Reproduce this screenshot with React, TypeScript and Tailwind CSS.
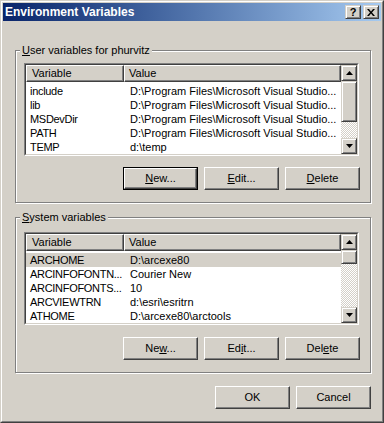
import type { ReactNode } from 'react';

type Row = { name: string; value: string; selected?: boolean };

const userVars: Row[] = [
  { name: 'include', value: 'D:\\Program Files\\Microsoft Visual Studio...' },
  { name: 'lib', value: 'D:\\Program Files\\Microsoft Visual Studio...' },
  { name: 'MSDevDir', value: 'D:\\Program Files\\Microsoft Visual Studio...' },
  { name: 'PATH', value: 'D:\\Program Files\\Microsoft Visual Studio...' },
  { name: 'TEMP', value: 'd:\\temp' },
];

const systemVars: Row[] = [
  { name: 'ARCHOME', value: 'D:\\arcexe80', selected: true },
  { name: 'ARCINFOFONTN...', value: 'Courier New' },
  { name: 'ARCINFOFONTS...', value: '10' },
  { name: 'ARCVIEWTRN', value: 'd:\\esri\\esritrn' },
  { name: 'ATHOME', value: 'D:\\arcexe80\\arctools' },
];

function Arrow({ up }: { up?: boolean }) {
  return (
    <svg width="7" height="4" viewBox="0 0 7 4">
      {up ? <path d="M3.5 0 L7 4 L0 4 Z" fill="#000" /> : <path d="M0 0 L7 0 L3.5 4 Z" fill="#000" />}
    </svg>
  );
}

// raised 3d box used by scroll buttons and thumb
const raised =
  'border-t border-l border-t-[#d4d0c8] border-l-[#d4d0c8] border-r border-b border-r-[#404040] border-b-[#404040] shadow-[inset_1px_1px_0_#fff,inset_-1px_-1px_0_#808080] bg-[#d4d0c8]';

function ScrollBar({ thumb }: { thumb: number }) {
  return (
    <div className="w-[16px] flex flex-col h-full">
      <div className={`${raised} h-[16px] shrink-0 flex items-center justify-center`}>
        <Arrow up />
      </div>
      <div className={`${raised} shrink-0`} style={{ height: thumb }} />
      <div className="flex-1 bg-[repeating-conic-gradient(#fff_0%_25%,#d4d0c8_0%_50%)] bg-[length:2px_2px]" />
      <div className={`${raised} h-[16px] shrink-0 flex items-center justify-center`}>
        <Arrow />
      </div>
    </div>
  );
}

function VarList({ rows, thumb }: { rows: Row[]; thumb: number }) {
  return (
    <div className="w-[335px] h-[93px] border border-t-[#808080] border-l-[#808080] border-r-white border-b-white">
      <div className="h-full border border-t-[#404040] border-l-[#404040] border-r-[#d4d0c8] border-b-[#d4d0c8] bg-white flex">
        <div className="flex-1 overflow-hidden">
          {/* header */}
          <div className="flex h-[17px]">
            <div className="w-[98px] h-full bg-[#d4d0c8] border-t border-l border-t-white border-l-white border-r border-b border-r-[#404040] border-b-[#404040] shadow-[inset_-1px_-1px_0_#808080] pl-[5px] leading-[14px]">
              Variable
            </div>
            <div className="flex-1 h-full bg-[#d4d0c8] border-t border-l border-t-white border-l-white border-r border-b border-r-[#404040] border-b-[#404040] shadow-[inset_-1px_-1px_0_#808080] pl-[4px] leading-[14px]">
              Value
            </div>
          </div>
          <div className="pt-[2px]">
            {rows.map((r) => (
              <div
                key={r.name}
                className={`flex h-[14px] leading-[14px] whitespace-nowrap ${r.selected ? 'bg-[#d4d0c8]' : ''}`}
              >
                <div className="w-[98px] pl-[4px] overflow-hidden tracking-[-0.3px]">{r.name}</div>
                <div className="flex-1 pl-[6px] overflow-hidden">{r.value}</div>
              </div>
            ))}
          </div>
        </div>
        <ScrollBar thumb={thumb} />
      </div>
    </div>
  );
}

function Button({ children, isDefault }: { children: ReactNode; isDefault?: boolean }) {
  const face =
    'h-full w-full bg-[#d4d0c8] border-t border-l border-t-white border-l-white border-r border-b border-r-[#404040] border-b-[#404040] shadow-[inset_-1px_-1px_0_#808080] flex items-center justify-center';
  return (
    <div className={`w-[75px] h-[23px] shrink-0 ${isDefault ? 'border border-black' : ''}`}>
      <div className={face}>
        <span className="leading-[13px]">{children}</span>
      </div>
    </div>
  );
}

function Group({ label, height, children }: { label: ReactNode; height: number; children: ReactNode }) {
  return (
    <div
      className="relative ml-[12px] w-[356px] border border-[#808080] shadow-[inset_1px_1px_0_#fff,1px_1px_0_#fff] pl-[8px]"
      style={{ height }}
    >
      <span className="absolute -top-[7px] left-[4px] px-[2px] bg-[#d4d0c8] leading-[13px]">{label}</span>
      {children}
    </div>
  );
}

export default function App() {
  return (
    <div
      className="w-[384px] h-[423px] bg-[#d4d0c8] text-black text-[11px] border border-t-[#d4d0c8] border-l-[#d4d0c8] border-r-[#404040] border-b-[#404040]"
      style={{ fontFamily: '"Liberation Sans", Arial, sans-serif' }}
    >
      <div className="h-full border border-t-white border-l-white border-r-[#808080] border-b-[#808080] p-[1px]">
        {/* title bar */}
        <div className="h-[18px] flex items-center bg-gradient-to-r from-[#0a246a] to-[#a6caf0] pl-[2px] pr-[2px]">
          <span className="flex-1 text-white font-bold text-[12px] leading-[14px]">Environment Variables</span>
          <div className={`${raised} w-[16px] h-[14px] flex items-center justify-center font-bold text-[11px] leading-none`}>
            ?
          </div>
          <div className={`${raised} w-[16px] h-[14px] ml-[2px] flex items-center justify-center`}>
            <svg width="8" height="7" viewBox="0 0 8 7">
              <path d="M0 0 L2 0 L4 2.5 L6 0 L8 0 L5 3.5 L8 7 L6 7 L4 4.5 L2 7 L0 7 L3 3.5 Z" fill="#000" />
            </svg>
          </div>
        </div>

        <div className="pt-[29px]">
          <Group
            height={153}
            label={
              <>
                <u>U</u>ser variables for phurvitz
              </>
            }
          >
            <div className="pt-[12px]">
              <VarList rows={userVars} thumb={41} />
            </div>
            <div className="flex gap-[6px] ml-[99px] mt-[11px]">
              <Button isDefault>
                <u>N</u>ew...
              </Button>
              <Button>
                <u>E</u>dit...
              </Button>
              <Button>
                <u>D</u>elete
              </Button>
            </div>
          </Group>

          <div className="h-[14px]" />

          <Group
            height={156}
            label={
              <>
                <u>S</u>ystem variables
              </>
            }
          >
            <div className="pt-[14px]">
              <VarList rows={systemVars} thumb={14} />
            </div>
            <div className="flex gap-[6px] ml-[99px] mt-[12px]">
              <Button>
                Ne<u>w</u>...
              </Button>
              <Button>
                Ed<u>i</u>t...
              </Button>
              <Button>
                Del<u>e</u>te
              </Button>
            </div>
          </Group>

          <div className="flex gap-[6px] ml-[212px] mt-[13px]">
            <Button>OK</Button>
            <Button>Cancel</Button>
          </div>
        </div>
      </div>
    </div>
  );
}
